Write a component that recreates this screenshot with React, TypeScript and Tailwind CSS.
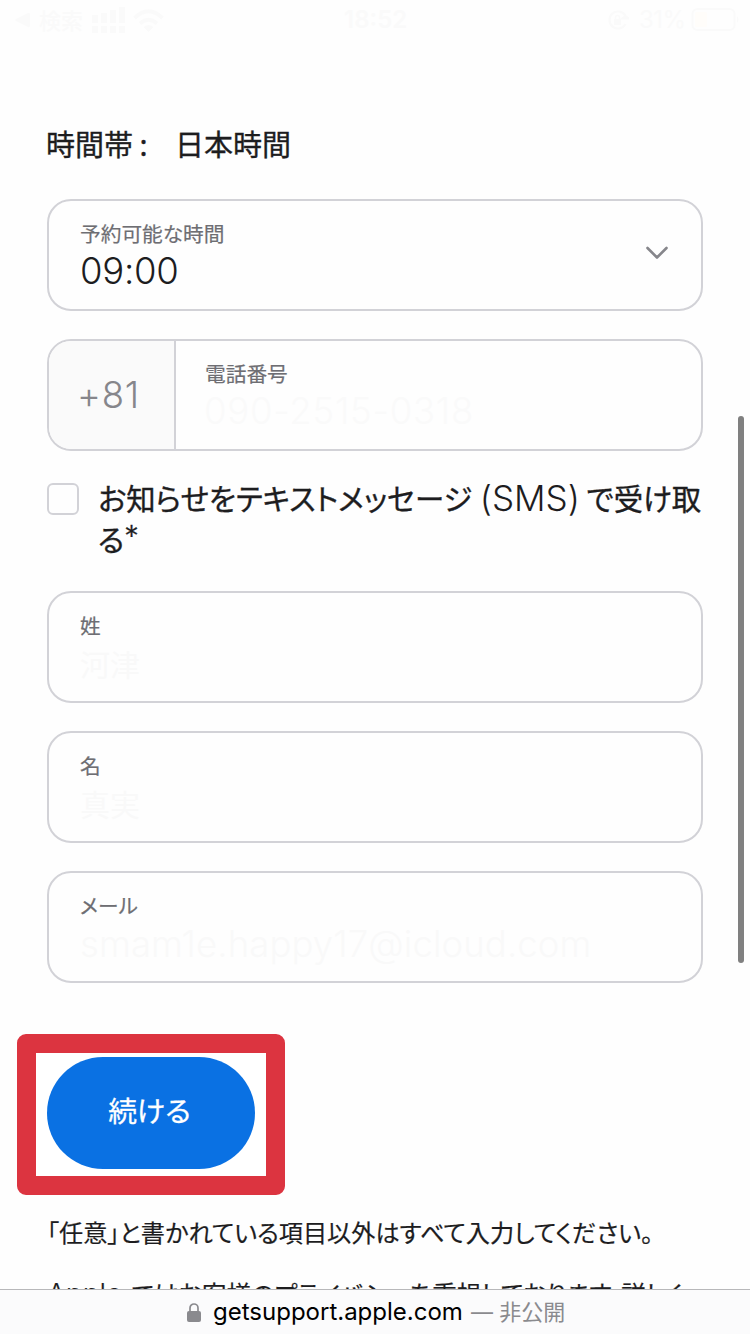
import type { ReactNode } from "react";

const jp = "font-['Noto_Sans_CJK_JP',sans-serif] [font-feature-settings:'palt']";
const heavier = "[-webkit-text-stroke:0.35px_currentColor]";
const latin = "font-['Inter','Noto_Sans_CJK_JP',sans-serif] font-light";

function StatusBar() {
  return (
    <header className="flex h-10 shrink-0 items-center text-[#fafafa]">
      <div className="flex w-[344px] items-center pl-[15px]">
        <svg width="15" height="16" viewBox="0 0 15 16" fill="currentColor">
          <path d="M1 7 L13 1 Q15 0 15 3 V13 Q15 16 13 15 L1 9 Q-1 8 1 7Z" />
        </svg>
        <span className="mb-[2px] ml-[9px] w-[44px] font-['Noto_Sans_CJK_JP',sans-serif] text-[22px] leading-9 font-medium">検索</span>
        <svg className="ml-[9px]" width="33" height="26" viewBox="0 0 33 26" fill="currentColor">
          <path d="M0 8h6v8H0zM9 6h6v10H9zM18 3h6v13h-6zM27 0h6v16h-6zM0 19h6v7H0zM9 19h6v7H9zM18 19h6v7h-6zM27 19h6v7h-6z" />
        </svg>
        <svg className="ml-2" width="31" height="23" viewBox="0 0 31 23">
          <g fill="none" stroke="currentColor" strokeWidth="4">
            <path d="M1.5 9 Q15.500 -4.500 29.500 9" />
            <path d="M7 14.500 Q15.500 7 24 14.500" />
          </g>
          <path d="M10.500 18 Q15.500 14 20.500 18 L15.500 23Z" fill="currentColor" />
        </svg>
      </div>
      <span className="w-[264px] font-['Inter',sans-serif] text-[24px] font-semibold">18:52</span>
      <svg width="21" height="20" viewBox="0 0 21 20" fill="none" stroke="currentColor" strokeWidth="2.200">
        <path d="M17.500 6a8.500 8.500 0 1 0 0 8M17.500 6l-3 2.500h6z" />
        <path d="M6 9h7v6H6z" fill="currentColor" stroke="none" />
        <path d="M7.500 9V7.500a2 2 0 0 1 4 0V9" strokeWidth="1.500" />
      </svg>
      <span className="ml-[10px] w-[52px] font-['Inter',sans-serif] text-[24px] tracking-[-0.5px]">31%</span>
      <svg width="48" height="24" viewBox="0 0 48 24" fill="none">
        <rect x="1.500" y="1" width="42" height="21" rx="5" stroke="currentColor" strokeWidth="2" />
        <rect x="4" y="4" width="12" height="15" rx="2" fill="#fffdfa" />
        <path d="M46 8q3 3.500 0 7z" fill="currentColor" />
      </svg>
    </header>
  );
}

function Field({ label, children, trailing }: { label: string; children: ReactNode; trailing?: ReactNode }) {
  return (
    <div className="flex h-[112px] shrink-0 items-center justify-between rounded-[24px] border-2 border-[#d2d2d7] pr-8 pl-[31px]">
      <FieldText label={label}>{children}</FieldText>
      {trailing}
    </div>
  );
}

function FieldText({ label, children }: { label: string; children: ReactNode }) {
  return (
    <div className="flex h-full flex-col pt-[17px]">
      <span className={`${jp} mb-px text-[20.700px] leading-[30px] whitespace-nowrap text-[#6e6e73] [-webkit-text-stroke:0.2px_currentColor]`}>{label}</span>
      {children}
    </div>
  );
}

export default function App() {
  return (
    <div className="relative flex h-[1334px] w-[750px] flex-col overflow-hidden bg-[#fefefe] text-[#1d1d1f]">
      <StatusBar />
      <main className="flex min-h-0 flex-1 flex-col overflow-hidden px-[47px]">
        <h2 className={`${jp} ${heavier} mt-[83px] mb-[2px] -ml-px flex h-10 shrink-0 text-[29px] leading-10`}>
          <span className="w-[129px]">時間帯 :</span>
          <span>日本時間</span>
        </h2>

        <section className="mt-[34px] flex shrink-0 flex-col gap-7">
          <Field
            label="予約可能な時間"
            trailing={
              <svg className="mb-[5px]" width="24" height="14" viewBox="0 0 24 14" fill="none" stroke="#86868b" strokeWidth="2.600" strokeLinecap="round" strokeLinejoin="round">
                <path d="M2.500 2 L12 11.500 L21.500 2" />
              </svg>
            }
          >
            <span className={`${latin} text-[36.500px] leading-[44px] tracking-[-0.3px]`}>09:00</span>
          </Field>

          <div className="flex h-[112px] overflow-hidden rounded-[24px] border-2 border-[#d2d2d7]">
            <div className={`${latin} flex w-[127px] items-center border-r-2 border-[#d2d2d7] bg-[#fafafa] pl-[28px] text-[36.500px] tracking-[0.8px] text-[#86868b]`}>+81</div>
            <div className="pl-[29px]">
              <FieldText label="電話番号">
                <span className={`${latin} -ml-px text-[36.500px] leading-[44px] tracking-[0.75px] text-[#fafafa]`}>090-2515-0318</span>
              </FieldText>
            </div>
          </div>
        </section>

        <label className="mt-7 flex h-[82px] shrink-0 gap-[19px]">
          <span className="mt-1 h-8 w-8 shrink-0 rounded-[6px] border-2 border-[#d2d2d7]" />
          <span className={`${jp} ${heavier} -mt-[2px] text-[29.400px] leading-[41px] whitespace-nowrap`}>
            お知らせをテキストメッセージ{" "}
            <span className={`${latin} relative top-px ml-px text-[35px] leading-[41px] [-webkit-text-stroke:0]`}>(SMS)</span> で受け取
            <br />
            る<span className={`${latin} text-[29px] leading-[20px] align-[5px]`}>*</span>
          </span>
        </label>

        <section className="mt-[30px] flex shrink-0 flex-col gap-7">
          <Field label="姓">
            <span className={`${jp} text-[30px] leading-[44px] text-[#f9f9f9]`}>河津</span>
          </Field>
          <Field label="名">
            <span className={`${jp} text-[30px] leading-[44px] text-[#f9f9f9]`}>真実</span>
          </Field>
          <Field label="メール">
            <span className={`${latin} text-[36.500px] leading-[46px] tracking-[0.1px] whitespace-nowrap text-[#f9f9f9]`}>smam1e.happy17@icloud.com</span>
          </Field>
        </section>

        <div className="mt-[51px] ml-[-30px] h-[161px] w-[268px] shrink-0 rounded-[9px] border-[19px] border-[#dc3440] bg-white pt-1 pl-[11px]">
          <button className={`${jp} h-[112px] w-[208px] rounded-full bg-[#0a71e3] pr-[3px] pb-[6px] text-[28.800px] text-white [-webkit-text-stroke:0.3px_currentColor]`}>続ける</button>
        </div>

        <p className={`${jp} mt-[17px] shrink-0 text-[24.200px] leading-10 whitespace-nowrap [-webkit-text-stroke:0.2px_currentColor]`}>「任意」と書かれている項目以外はすべて入力してください。</p>
        <p className={`${jp} mt-[22px] shrink-0 text-[24.500px] leading-10 whitespace-nowrap [-webkit-text-stroke:0.2px_currentColor]`}>
          <span className="inline-block w-[79px] font-['Inter',sans-serif] text-[28px] leading-10 font-light">Apple</span> ではお客様のプライバシーを重視しております。詳しく
        </p>
      </main>

      <footer className="flex h-[45px] shrink-0 items-center border-t border-[#b8b8ba] bg-[#fbfbfc] pl-[187px] font-['Inter','Noto_Sans_CJK_JP',sans-serif]">
        <svg width="14" height="19" viewBox="0 0 14 19">
          <rect y="8" width="14" height="11" rx="2" fill="#8a8a8e" />
          <path d="M3 9V5a4 4 0 0 1 8 0v4" fill="none" stroke="#8a8a8e" strokeWidth="1.700" />
        </svg>
        <span className="ml-3 w-[258px] text-[24px] leading-7 text-black">getsupport.apple.com</span>
        <span className="text-[22px] leading-7 text-[#8a8a8e]">— 非公開</span>
      </footer>

      <div className="absolute top-[416px] left-[738px] h-[547px] w-1.5 rounded-full bg-[#808080]" />
    </div>
  );
}
